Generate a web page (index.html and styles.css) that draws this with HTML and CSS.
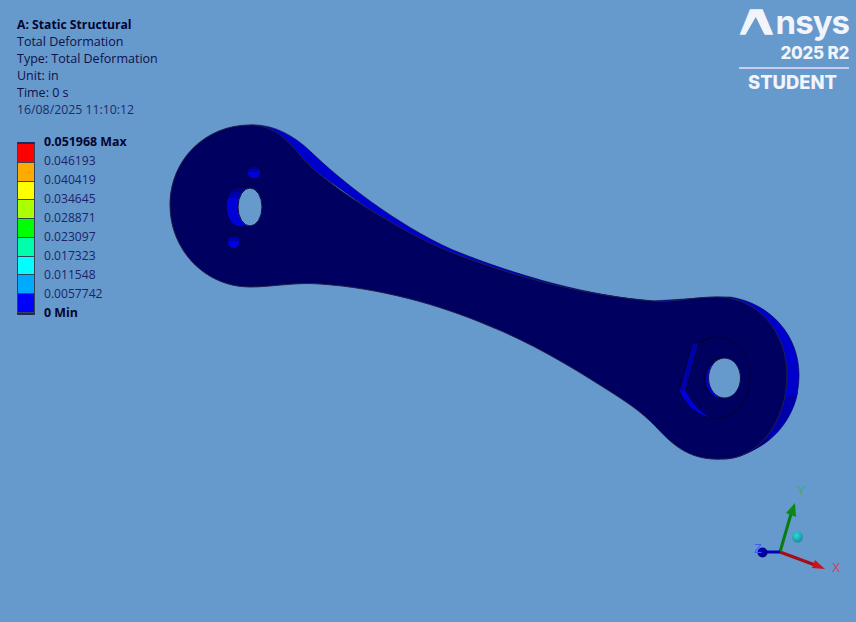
FILE: index.html
```html
<!DOCTYPE html>
<html lang="en">
<head>
<meta charset="utf-8">
<title>A: Static Structural</title>
<link rel="stylesheet" href="styles.css">
</head>
<body>
<main class="viewport">
  <svg class="model" width="856" height="622" viewBox="0 0 856 622" aria-label="Deformed link model">
    <defs>
      <radialGradient id="ballBlue" cx="0.4" cy="0.35" r="0.7">
        <stop offset="0" stop-color="#0000d8"/>
        <stop offset="1" stop-color="#000070"/>
      </radialGradient>
      <radialGradient id="ballTeal" cx="0.4" cy="0.35" r="0.7">
        <stop offset="0" stop-color="#30d8dc"/>
        <stop offset="1" stop-color="#148a98"/>
      </radialGradient>
      <clipPath id="clipBore"><ellipse cx="240" cy="206.500" rx="14" ry="20.500"/></clipPath>
      <clipPath id="clipPinTop"><ellipse cx="254" cy="172" rx="7" ry="7"/></clipPath>
      <clipPath id="clipPinLow"><ellipse cx="233.500" cy="241.500" rx="6.500" ry="7.500"/></clipPath>
      <clipPath id="clipRing"><ellipse cx="722" cy="379" rx="16" ry="19.500"/></clipPath>
    </defs>
    <!-- back face, seen behind the front one -->
    <path class="rim" d="M250 125 C272 124 292 134 310 151 C340 180 395 224 453 250 C520 277 590 296 653 301 L717 297 L730 297 C770 303 799 335 799 375 C799 410 780 436 757 448 C745 455 735 459 723 459 Z"/>
    <path class="rim-shade" d="M786 397 L798 392 C794 412 785 424 772 437 L764 440 C774 428 781 412 786 397 Z"/>
    <path class="rim-deep" d="M772 437 C762 447 745 457 723 459 C742 456 754 449 764 440 Z"/>
    <!-- front face -->
    <path class="face" d="M250 125 C272 125 285 137 300 155 C312 170 325 178 340 190 C375 214 415 238 453 253 C520 279 590 296 653 301 C672 303 690 297 717 297 C758 297 787 332 787 375 C787 422 758 459 723 459 C690 461 673 445 657 428 C640 410 625 401 603 387 C570 366 530 342 487 325 C440 305 380 288 320 284 C295 282 272 287 250 287 C205 287 170 250 170 205 C170 160 205 125 250 125 Z"/>

    <!-- left bore -->
    <ellipse class="bore-top" cx="240" cy="206.500" rx="14" ry="20.500"/>
    <g clip-path="url(#clipBore)">
      <rect class="bore-mid" x="224" y="192" width="32" height="6"/>
      <rect class="bore-lit" x="224" y="198" width="32" height="32"/>
    </g>
    <ellipse class="outline" cx="240" cy="206.500" rx="14" ry="20.500"/>
    <ellipse class="hole" cx="250" cy="207" rx="12" ry="19"/>

    <!-- small pin holes -->
    <ellipse class="bore-top" cx="254" cy="172" rx="7" ry="7"/>
    <g clip-path="url(#clipPinTop)">
      <rect class="bore-mid" x="246" y="169" width="16" height="3"/>
      <rect class="bore-lit" x="246" y="172" width="16" height="8"/>
    </g>
    <ellipse class="outline" cx="254" cy="172" rx="7" ry="7"/>
    <ellipse class="bore-top" cx="233.500" cy="241.500" rx="6.500" ry="7.500"/>
    <g clip-path="url(#clipPinLow)">
      <rect class="bore-mid" x="226" y="238" width="16" height="3"/>
      <rect class="bore-lit" x="226" y="241" width="16" height="9"/>
    </g>
    <ellipse class="outline" cx="233.500" cy="241.500" rx="6.500" ry="7.500"/>

    <!-- hex pocket and washer on the right lobe -->
    <path class="bore-top" d="M692 344 L714 337 L699 343 Z"/>
    <path class="bore-mid" d="M692 344 L699 343 L686 390 L679 391 Z"/>
    <path class="bore-lit" d="M679 391 L686 390 C691 402 702 414 714 418 C698 417 687 407 679 391 Z"/>
    <path class="edge" d="M692 344 L714 337 M692 344 L679 391 C687 407 698 417 714 418"/>
    <path class="edge" d="M699 343 L686 390 C691 402 702 414 714 418"/>
    <path class="edge" d="M699 343 L714 337 C735 337 750 355 750 378 C750 402 735 418 714 418"/>
    <ellipse class="outline" cx="721" cy="378" rx="17" ry="20.500"/>
    <g clip-path="url(#clipRing)">
      <rect class="bore-lit" x="700" y="365" width="30" height="36"/>
    </g>
    <ellipse class="hole" cx="724.500" cy="378" rx="16" ry="20"/>

    <!-- triad -->
    <g class="triad">
      <line class="axis-x" x1="780" y1="552" x2="815" y2="565"/>
      <polygon class="head-x" points="825,569 812,568 815,560"/>
      <line class="axis-y" x1="780" y1="552" x2="791" y2="514"/>
      <polygon class="head-y" points="795,503 796,517 786,513"/>
      <line class="axis-z" x1="780" y1="552" x2="763" y2="552"/>
      <circle cx="762.500" cy="552.500" r="5" fill="url(#ballBlue)"/>
      <circle cx="797.500" cy="537" r="5.500" fill="url(#ballTeal)"/>
      <text class="tick tick-y" x="797" y="495">Y</text>
      <text class="tick tick-z" x="754" y="553">Z</text>
      <text class="tick tick-x" x="832" y="572">X</text>
    </g>
  </svg>

  <section class="info">
    <h1 class="info-title">A: Static Structural</h1>
    <p>Total Deformation</p>
    <p>Type: Total Deformation</p>
    <p>Unit: in</p>
    <p>Time: 0 s</p>
    <p class="info-date">16/08/2025 11:10:12</p>
  </section>

  <section class="legend">
    <div class="legend-bar">
      <span class="cell c1"></span>
      <span class="cell c2"></span>
      <span class="cell c3"></span>
      <span class="cell c4"></span>
      <span class="cell c5"></span>
      <span class="cell c6"></span>
      <span class="cell c7"></span>
      <span class="cell c8"></span>
      <span class="cell c9"></span>
    </div>
    <ul class="legend-labels">
      <li class="strong">0.051968 Max</li>
      <li>0.046193</li>
      <li>0.040419</li>
      <li>0.034645</li>
      <li>0.028871</li>
      <li>0.023097</li>
      <li>0.017323</li>
      <li>0.011548</li>
      <li>0.0057742</li>
      <li class="strong">0 Min</li>
    </ul>
  </section>

  <aside class="brand">
    <div class="brand-name"><span class="brand-a">A</span>nsys</div>
    <div class="brand-version">2025 R2</div>
    <div class="brand-edition">STUDENT</div>
  </aside>
</main>
</body>
</html>
```
FILE: styles.css
```css
* { box-sizing: border-box; }
html, body { margin: 0; padding: 0; }
body {
  background: #6699cc;
  overflow: hidden;
  font-family: "Open Sans", "Noto Sans", sans-serif;
}
.viewport { position: relative; width: 856px; height: 622px; overflow: hidden; }
.model { position: absolute; left: 0; top: 0; display: block; }

.rim { fill: #0000cc; stroke: #000050; stroke-width: 0.6; }
.rim-shade { fill: #0000aa; }
.rim-deep { fill: #000078; }
.face { fill: #000060; stroke: #20204a; stroke-width: 1; stroke-linejoin: round; }
.bore-top { fill: #000080; }
.bore-mid { fill: #0000a8; }
.bore-lit { fill: #0000d8; }
.outline { fill: none; stroke: #000030; stroke-width: 1; }
.hole { fill: #6699cc; stroke: #10104a; stroke-width: 1; }
.edge { fill: none; stroke: #000030; stroke-width: 1; }

.axis-x { stroke: #aa0a14; stroke-width: 3; }
.axis-y { stroke: #0a7a14; stroke-width: 3; }
.axis-z { stroke: #0000c0; stroke-width: 3; }
.head-x { fill: #d0101a; }
.head-y { fill: #0a8a14; }
.tick { font-size: 12.500px; font-family: "Liberation Sans", sans-serif; }
.tick-y { fill: #40a878; }
.tick-z { fill: #4060f0; }
.tick-x { fill: #d8405a; }

.info {
  position: absolute;
  left: 17px;
  top: 16px;
  color: #10104a;
  font-size: 12.500px;
  line-height: 17px;
}
.info p { margin: 0; white-space: nowrap; }
.info-title { margin: 0; font-size: 12.200px; line-height: 17px; font-weight: 700; color: #050530; }
.info .info-date { color: #1c2c6a; font-size: 12.300px; }

.legend {
  position: absolute;
  left: 17px;
  top: 133px;
  display: flex;
  gap: 9px;
  align-items: flex-start;
}
.legend-bar {
  width: 18px;
  margin-top: 9px;
  height: 173px;
  display: flex;
  flex-direction: column;
  background: #1a2a5a;
  padding: 2px 0;
  border-radius: 1px;
}
.cell { flex: 1; display: block; border: 1px solid #33445a; border-top-width: 0; }
.c1 { background: #ff0000; }
.c2 { background: #ffaa00; }
.c3 { background: #ffff00; }
.c4 { background: #aaff00; }
.c5 { background: #00ff00; }
.c6 { background: #00ffaa; }
.c7 { background: #00ffff; }
.c8 { background: #00aaff; }
.c9 { background: #0000ff; }
.legend-labels {
  margin: -1px 0 0;
  padding: 0;
  list-style: none;
  font-size: 12.100px;
  line-height: 19px;
  color: #1c2468;
}
.legend-labels .strong { font-weight: 700; color: #050530; font-size: 12.400px; }

.brand {
  position: absolute;
  right: 7px;
  top: 3px;
  width: 110px;
  display: flex;
  flex-direction: column;
  align-items: flex-end;
  color: #f2f4fb;
  font-family: Inter, "Open Sans", sans-serif;
  font-weight: 700;
}
.brand-name { font-size: 33px; line-height: 38px; letter-spacing: -1px; white-space: nowrap; }
.brand-a {
  display: inline-block;
  margin-right: 10px;
  font-weight: 900;
  -webkit-text-stroke: 1.500px #f2f4fb;
  transform: scaleX(1.250);
  transform-origin: left center;
  clip-path: polygon(-10% 0, 110% 0, 110% 100%, 88% 100%, 50% 14px, 6% 100%, -10% 100%);
}
.brand-version { margin-top: 3px; font-size: 17px; line-height: 18px; letter-spacing: -0.250px; font-weight: 800; }
.brand-edition {
  align-self: stretch;
  margin-top: 5px;
  border-top: 2px solid #ccccee;
  padding-left: 9px;
  font-size: 18.400px;
  line-height: 26px;
  font-weight: 800;
}
```
